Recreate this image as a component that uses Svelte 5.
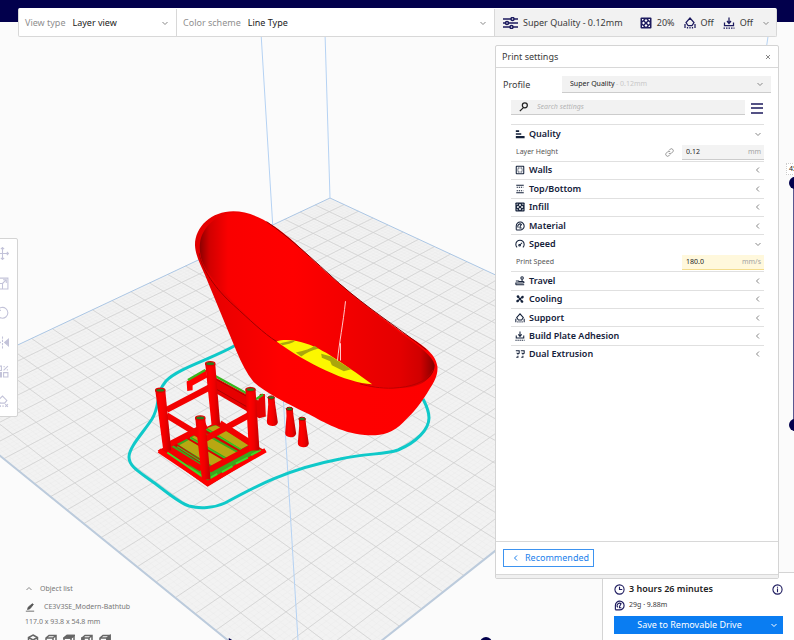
<script>
  let viewType = 'layer';
  let colorScheme = 'line';
  let profile = 'super';
  let search = '';
  let topLayer = 100;
  let bottomLayer = 0;
  let pathStep = 100;

  let rows = [
    { kind: 'category', name: 'Quality', icon: 'quality', open: true },
    { kind: 'setting', id: 'layer-height', name: 'Layer Height', value: '0.12', unit: 'mm', linked: true },
    { kind: 'category', name: 'Walls', icon: 'walls' },
    { kind: 'category', name: 'Top/Bottom', icon: 'topbottom' },
    { kind: 'category', name: 'Infill', icon: 'infill' },
    { kind: 'category', name: 'Material', icon: 'material' },
    { kind: 'category', name: 'Speed', icon: 'speed', open: true },
    { kind: 'setting', id: 'print-speed', name: 'Print Speed', value: '180.0', unit: 'mm/s', changed: true },
    { kind: 'category', name: 'Travel', icon: 'travel' },
    { kind: 'category', name: 'Cooling', icon: 'cooling' },
    { kind: 'category', name: 'Support', icon: 'support' },
    { kind: 'category', name: 'Build Plate Adhesion', icon: 'adhesion' },
    { kind: 'category', name: 'Dual Extrusion', icon: 'dual' }
  ];

  const tools = ['Move', 'Scale', 'Rotate', 'Mirror', 'Per model settings', 'Support blocker'];
  const views = ['3D view', 'Front view', 'Top view', 'Left view', 'Right view'];

  // build plate corners on screen: back, right, front, left
  const plate = [[330, 198], [715, 377], [304, 702], [-80, 391]];
  const cells = 22;

  // square to quad projection
  const [p0, p1, p2, p3] = plate;
  const sx = p0[0] - p1[0] + p2[0] - p3[0];
  const sy = p0[1] - p1[1] + p2[1] - p3[1];
  const ax = p1[0] - p2[0];
  const ay = p1[1] - p2[1];
  const bx = p3[0] - p2[0];
  const by = p3[1] - p2[1];
  const det = ax * by - bx * ay;
  const g = (sx * by - bx * sy) / det;
  const h = (ax * sy - sx * ay) / det;

  function project(u, v) {
    const w = g * u + h * v + 1;
    const x = (p1[0] - p0[0] + g * p1[0]) * u + (p3[0] - p0[0] + h * p3[0]) * v + p0[0];
    const y = (p1[1] - p0[1] + g * p1[1]) * u + (p3[1] - p0[1] + h * p3[1]) * v + p0[1];
    return (x / w).toFixed(2) + ' ' + (y / w).toFixed(2);
  }

  function gridPath(count) {
    let d = '';
    for (let i = 1; i < count; i++) {
      const t = i / count;
      d += `M${project(t, 0)}L${project(t, 1)}M${project(0, t)}L${project(1, t)}`;
    }
    return d;
  }

  const majorGrid = gridPath(cells);
  const minorGrid = gridPath(cells * 5);

  function toggle(row) {
    row.open = !row.open;
    rows = rows;
  }
</script>

{#snippet icon(name)}
  <svg class="icon" viewBox="0 0 24 24" aria-hidden="true">
    {#if name === 'quality'}
      <path class="solid" d="M2 3h8v4H2zM2 10h13v4H2zM2 17h21v5H2z" />
    {:else if name === 'walls'}
      <rect x="3" y="3" width="18" height="18" rx="1" />
      <rect x="7" y="7" width="10" height="10" stroke-dasharray="2 2" />
    {:else if name === 'topbottom'}
      <path d="M3 3h18M3 21h18" />
      <path d="M4 8h16M4 16h16" stroke-dasharray="3 2" />
    {:else if name === 'infill'}
      <rect class="solid" x="1" y="1" width="22" height="22" rx="2" />
      <path class="hole" d="M12 4l3 3-3 3-3-3zM12 14l3 3-3 3-3-3zM4 12l3-3 3 3-3 3zM14 12l3-3 3 3-3 3zM4 4h4l-4 4zM20 4v4l-4-4zM4 20v-4l4 4zM20 20h-4l4-4z" />
    {:else if name === 'material'}
      <path d="M3 21V12a9.500 9.500 0 1 1 9 9.500H3" />
      <path d="M8 16a5 5 0 1 1 8-7M12 14l4-7M12 14v3h4" />
    {:else if name === 'speed'}
      <path d="M5 20a10 10 0 1 1 14 0M11 15l6-6" />
      <circle cx="11" cy="15" r="2" />
    {:else if name === 'travel'}
      <path d="M2 21h20M2 21v-4h16c5 0 5-4 0-4H8M2 12h8" />
      <circle cx="17" cy="5" r="3" />
      <path d="M17 8v4" />
    {:else if name === 'cooling'}
      <circle class="solid" cx="12" cy="12" r="3" />
      <path class="solid" d="M11 11C3 10 2 3 7 3c4 0 4 4 4 8zM13 11c1-8 8-9 8-4 0 4-4 4-8 4zM13 13c8 1 9 8 4 8-4 0-4-4-4-8zM11 13c-1 8-8 9-8 4 0-4 4-4 8-4z" />
    {:else if name === 'support'}
      <path d="M8 17l-4-6 8-9 8 9-4 6zM2 14v8M22 14v8M7 20v3M12 20v3M17 20v3" />
    {:else if name === 'adhesion'}
      <path d="M12 1v11M8 8l4 5 4-5M3 11v6h18v-6" />
      <path d="M1 22h22" stroke-dasharray="3 2" />
    {:else if name === 'dual'}
      <path d="M2 4h8v6l-3 2-3-3M14 4h8v6l-3 2-3-3M3 20h4v-4M15 20h4v-4" />
    {/if}
  </svg>
{/snippet}

{#snippet chevron(dir)}
  <svg class="chevron" viewBox="0 0 16 16" aria-hidden="true">
    {#if dir === 'left'}
      <path d="M10 3L5 8l5 5" />
    {:else if dir === 'up'}
      <path d="M3 10l5-5 5 5" />
    {:else}
      <path d="M3 6l5 5 5-5" />
    {/if}
  </svg>
{/snippet}

<div class="app">
  <svg class="scene" viewBox="0 0 794 640" preserveAspectRatio="xMidYMid slice" role="img" aria-label="Sliced model on the build plate">
    <defs>
      <linearGradient id="inner" x1="0" y1="0" x2="1" y2="0">
        <stop offset="0" stop-color="#8c0000" />
        <stop offset="0.040" stop-color="#d00000" />
        <stop offset="0.120" stop-color="#fa0000" />
        <stop offset="0.400" stop-color="#ff0000" />
        <stop offset="0.600" stop-color="#f40000" />
        <stop offset="0.850" stop-color="#e40000" />
        <stop offset="0.940" stop-color="#d00000" />
        <stop offset="1" stop-color="#850000" />
      </linearGradient>
      <linearGradient id="outer" x1="0" y1="0" x2="1" y2="0">
        <stop offset="0" stop-color="#e00000" />
        <stop offset="0.150" stop-color="#ee0000" />
        <stop offset="0.350" stop-color="#ff0000" />
        <stop offset="1" stop-color="#fd0000" />
      </linearGradient>
      <linearGradient id="leg" x1="0" y1="0" x2="1" y2="0">
        <stop offset="0" stop-color="#e80000" />
        <stop offset="0.300" stop-color="#ff0000" />
        <stop offset="0.600" stop-color="#f00000" />
        <stop offset="1" stop-color="#c00000" />
      </linearGradient>
    </defs>

    <polygon class="plate" points={plate.map((p) => p.join(',')).join(' ')} />
    <path class="minor" d={minorGrid} />
    <path class="major" d={majorGrid} />
    <polygon class="edge" points={plate.map((p) => p.join(',')).join(' ')} />
    <path class="frontedge" d="M-80 391L304 702 715 377" />
    <path class="frame" d="M324 0L330 198M259 0L298 640M769 30l-3 20" />

    <!-- skirt -->
    <path class="skirt" d="M236 345C212 359 178 368 166 381C155 394 161 404 152 419C143 433 129 447 129 457C129 466 138 471 153 482C167 492 179 503 189 506C200 509 214 508 225 503C256 486 288 469 340 459C365 453 384 455 398 450C417 442 429 429 429 418C429 410 426 405 423 399" />

    <!-- stool -->
    <g transform="translate(120 330) scale(0.333)">
      <path fill="#e60000" d="M113 362L288 278l150 85-175 108z" />
      <path fill="#3ba61c" d="M150 350L285 284l138 78-162 98z" />
      <path fill="#b9a712" d="M178 346l32-18 110 66-33 20zM216 322l26-14 112 62-28 17zM262 294l26-8 100 58-24 13z" />
      <path class="gap" d="M164 343l118 78M202 323l122 72M250 300l114 64" />
      <path stroke="#2fcf22" stroke-width="4" fill="none" d="M172 350l108 68M210 324l116 68M258 298l106 62" />
      <path stroke="#ff0000" stroke-width="14" fill="none" d="M117 362l146 98 174-99" />
      <path stroke="#42d927" stroke-width="6" fill="none" d="M142 368l112 76M270 445l22-13M306 427l32-18M348 401l36-18M394 376l28-16" />
      <path fill="#e60000" d="M285 142l130 70 5-20 15 0 3 68-20 5-130-75z" />
      <path fill="#ff0000" d="M200 155l58-36 4 24-44 24v14l-16 2z" />
      <path stroke="#39b51f" stroke-width="7" fill="none" d="M204 150l52-30M286 138l98 54M408 208l22-14" />
      <path stroke="#ad0000" stroke-width="3" fill="none" d="M288 148l94 52M290 178l90 52" />
      <path class="bar" d="M140 240l130-68M300 280l105 68M140 348l120-62" />
      <path fill="url(#leg)" d="M256 102h30l15 184h-26z" />
      <path class="bar" d="M140 256l102 62M258 326l140-76" />
      <path class="bar" d="M145 355l100 62M268 420l130-70" />
      <path fill="url(#leg)" d="M106 182h30l18 180h-24z" />
      <path fill="url(#leg)" d="M377 180h30l12 182h-32z" />
      <path fill="url(#leg)" d="M226 265h30l16 184h-26z" />
      <g fill="#287f1c" stroke="#e00000" stroke-width="4">
        <ellipse cx="271" cy="101" rx="14" ry="6" />
        <ellipse cx="121" cy="181" rx="14" ry="6" />
        <ellipse cx="392" cy="179" rx="14" ry="6" />
        <ellipse cx="241" cy="264" rx="14" ry="6" />
      </g>
      <!-- pegs -->
      {#each [[454, 203], [509, 237], [547, 267]] as [x, y]}
        <path fill="url(#leg)" d="M{x - 10} {y}h20l2 20 8 54q-2 12-17 11-16-1-16-12l4-52z" />
        <ellipse cx={x} cy={y} rx="10" ry="5" fill="#23801e" stroke="#b80000" stroke-width="3" />
      {/each}
    </g>

    <!-- bathtub -->
    <g transform="translate(180 200) scale(0.333)">
      <path fill="url(#outer)" d="M45 135C45 80 95 34 160 34C220 34 280 72 330 115C385 165 440 220 490 260C550 312 620 362 668 398C720 430 768 458 773 500C775 525 765 545 750 567C725 610 700 640 670 668C635 703 600 709 555 706C480 700 420 660 380 640C320 610 250 575 220 545C200 520 185 490 170 455L75 225C60 190 46 165 45 135z" />
      <path fill="url(#inner)" d="M60 130C65 85 105 42 165 38C220 38 280 80 330 123C380 167 430 218 485 263C550 316 620 366 665 402C720 440 758 468 765 496C763 535 720 564 665 564C590 570 480 540 400 495C350 460 315 438 290 425C220 370 160 310 120 260C80 220 55 180 60 130z" />
      <path stroke="#8a0000" stroke-width="3" fill="none" d="M260 65C330 112 400 180 480 252C560 322 650 380 740 450" />
      <path stroke="#a00000" stroke-width="3" fill="none" d="M58 160C65 210 110 270 160 315C210 360 250 400 290 425" />
      <path stroke="#b80000" stroke-width="3" fill="none" d="M760 510C740 550 690 562 640 565C600 566 570 560 540 552" />
      <path fill="#fcf700" d="M290 425C310 417 350 420 380 432C430 448 480 485 577 553C500 550 380 490 290 425z" />
      <path fill="#aaa60c" d="M300 430l42-9q10 2-14 11l-20 4zM348 458q40-8 56-20l12 8q-30 8-52 24zM424 462l30 8 60 38-22 6-36-18-5-12-25-10z" />
      <path stroke="#ffc8c8" stroke-width="3" fill="none" d="M497 304C490 370 478 430 473 482M482 430v52" />
    </g>
  </svg>

  <header class="topbar">
    <div class="stage">
      <div class="pick">
        <label for="view-type">View type</label>
        <select id="view-type" bind:value={viewType}>
          <option value="layer">Layer view</option>
        </select>
        {@render chevron('down')}
      </div>
      <div class="pick">
        <label for="color-scheme">Color scheme</label>
        <select id="color-scheme" bind:value={colorScheme}>
          <option value="line">Line Type</option>
        </select>
        {@render chevron('down')}
      </div>
      <button class="summary">
        <svg class="sliders" viewBox="0 0 30 24" aria-hidden="true">
          <path d="M0 4h16M22 4h8M0 12h5M11 12h19M0 20h14M20 20h10" />
          <circle cx="19" cy="4" r="3" />
          <circle cx="8" cy="12" r="3" />
          <circle cx="17" cy="20" r="3" />
        </svg>
        <span class="quality">Super Quality - 0.12mm</span>
        <span class="stat">{@render icon('infill')}20%</span>
        <span class="stat">{@render icon('support')}Off</span>
        <span class="stat">{@render icon('adhesion')}Off</span>
        {@render chevron('down')}
      </button>
    </div>
  </header>

  <main>
    <nav class="tools" aria-label="Tools">
      {#each tools as tool, i}
        <button aria-label={tool}>
          <svg viewBox="0 0 24 24" aria-hidden="true">
            {#if i === 0}
              <path d="M12 1v22M1 12h22M9 4l3-3 3 3M9 20l3 3 3-3M4 9l-3 3 3 3M20 9l3 3-3 3" />
            {:else if i === 1}
              <path d="M2 2h20v20H2zM2 12h10v10M12 12l7-7M13 5h6v6" />
            {:else if i === 2}
              <path d="M3 8a10 10 0 1 1 0 9" />
              <path d="M3 2v6h6" />
            {:else if i === 3}
              <path d="M12 1v22" stroke-dasharray="4 2" />
              <path fill="#c3c3d9" d="M16 12l7-6v12zM8 12L1 6v12z" />
            {:else if i === 4}
              <path d="M2 2h8v8H2zM14 14h8v8h-8zM14 10l8-8M14 3h2M20 9h2" />
              <path fill="#c3c3d9" d="M3 14h7v8H3z" />
            {:else}
              <path d="M8 15l-4-5 8-8 8 8-4 5zM3 17v5M8 19v3M13 19v3M17 17l5 5M22 17l-5 5" />
            {/if}
          </svg>
        </button>
      {/each}
    </nav>

    <section class="panel" aria-labelledby="panel-title">
      <div class="panelhead">
        <h2 id="panel-title">Print settings</h2>
        <button class="close" aria-label="Close">
          <svg viewBox="0 0 8 8" aria-hidden="true"><path d="M2 2l4 4M6 2L2 6" /></svg>
        </button>
      </div>

      <div class="profile">
        <label for="profile">Profile</label>
        <div class="profilebox">
          <select id="profile" bind:value={profile}>
            <option value="super">Super Quality</option>
          </select>
          <span class="detail">- 0.12mm</span>
          {@render chevron('down')}
        </div>
      </div>

      <div class="searchrow">
        <div class="search">
          <svg viewBox="0 0 12 12" aria-hidden="true"><circle cx="7" cy="4" r="3" /><path d="M5 7L1 11" /></svg>
          <input type="text" placeholder="Search settings" aria-label="Search settings" bind:value={search} />
        </div>
        <button class="menu" aria-label="Setting visibility">
          <svg viewBox="0 0 12 12" aria-hidden="true"><path d="M0 2h12M0 6h12M0 11h12" /></svg>
        </button>
      </div>

      <div class="settings">
        {#each rows as row}
          {#if row.kind === 'category'}
            <button class="category" aria-expanded={!!row.open} on:click={() => toggle(row)}>
              {@render icon(row.icon)}
              <span>{row.name}</span>
              {@render chevron(row.open ? 'down' : 'left')}
            </button>
          {:else}
            <div class="setting">
              <label for={row.id}>{row.name}</label>
              {#if row.linked}
                <svg class="link" viewBox="0 0 24 24" aria-hidden="true">
                  <path d="M10 14a5 5 0 0 0 7 0l4-4a5 5 0 0 0-7-7l-3 3M14 10a5 5 0 0 0-7 0l-4 4a5 5 0 0 0 7 7l3-3" />
                </svg>
              {/if}
              <div class="value" class:changed={row.changed}>
                <input id={row.id} type="text" bind:value={row.value} />
                <span>{row.unit}</span>
              </div>
            </div>
          {/if}
        {/each}
      </div>

      <div class="panelfoot">
        <button class="recommended">{@render chevron('left')}Recommended</button>
      </div>
      <div class="grip"></div>
    </section>

    <div class="layers">
      <span class="layerlabel">45</span>
      <div class="track">
        <input type="range" aria-label="Top layer" bind:value={topLayer} />
        <input type="range" aria-label="Bottom layer" bind:value={bottomLayer} />
      </div>
    </div>
  </main>

  <footer>
    <div class="objects">
      <button class="listhead">{@render chevron('up')}Object list</button>
      <div class="object">
        <svg viewBox="0 0 12 12" aria-hidden="true"><path d="M1 11h10" /><path fill="#555" d="M3 9l1-3 5-4 1 1-4 5z" /></svg>
        <span>CE3V3SE_Modern-Bathtub</span>
      </div>
      <p>117.0 x 93.8 x 54.8 mm</p>
      <div class="views">
        {#each views as view, i}
          <button aria-label={view}>
            <svg viewBox="0 0 24 24" aria-hidden="true">
              {#if i === 0}
                <path d="M12 2l9 5v10l-9 5-9-5V7zM3 7l9 5 9-5M12 12v10" />
              {:else}
                <path d="M2 8l6-5h14v12l-6 6H2zM2 8h14v13M16 8l6-5" />
                {#if i === 2}<path fill="#666" d="M2 8l6-5h14l-6 5z" />{/if}
                {#if i === 3}<path fill="#666" d="M2 8h4v13H2z" />{/if}
                {#if i === 4}<path fill="#666" d="M16 8l6-5v12l-6 6z" />{/if}
              {/if}
            </svg>
          </button>
        {/each}
      </div>
    </div>

    <div class="simulation">
      <button aria-label="Play"><svg viewBox="0 0 12 12" aria-hidden="true"><path d="M1 0l10 6-10 6z" /></svg></button>
      <input type="range" aria-label="Path position" bind:value={pathStep} />
    </div>

    <section class="job">
      <div class="time">
        <svg viewBox="0 0 12 12" aria-hidden="true"><circle cx="6" cy="6" r="5" /><path d="M6 3v3h3" /></svg>
        <strong>3 hours 26 minutes</strong>
        <button aria-label="Print time details">
          <svg viewBox="0 0 12 12" aria-hidden="true"><circle cx="6" cy="6" r="5" /><path d="M6 5v4M6 3v1" /></svg>
        </button>
      </div>
      <div class="usage">{@render icon('material')}29g · 9.88m</div>
      <div class="save">
        <button class="savemain">Save to Removable Drive</button>
        <button class="savemore" aria-label="Choose output">{@render chevron('down')}</button>
      </div>
    </section>
  </footer>
</div>

<style>
  :global(body) {
    margin: 0;
    background: #fbfbfb;
  }
  .app {
    position: relative;
    display: grid;
    grid-template-rows: auto minmax(0, 1fr) 68px;
    height: 100vh;
    overflow: hidden;
    background: #fbfbfb;
    color: #3a3a3a;
    font-family: "Noto Sans", sans-serif;
    font-size: 9px;
    line-height: 12px;
  }
  button, input, select {
    font: inherit;
    color: inherit;
    margin: 0;
    padding: 0;
    border: 0;
    border-radius: 0;
    background: none;
    min-width: 0;
  }
  button {
    cursor: pointer;
  }
  select {
    appearance: none;
  }
  svg {
    display: block;
    fill: none;
    flex: none;
  }

  /* 3D scene */
  .scene {
    position: absolute;
    top: 0;
    left: 0;
    width: 100%;
    height: 100%;
  }
  .plate { fill: #f2f2f2; }
  .minor { stroke: #e8e8e8; stroke-width: 0.3; }
  .major { stroke: #d0d0d0; stroke-width: 0.8; }
  .edge { stroke: #abc6e4; }
  .frontedge { stroke: #bccbdc; stroke-width: 2; }
  .frame { stroke: #b5d2f3; }
  .skirt { stroke: #0fc9c9; stroke-width: 3; }
  .gap { stroke: #d80000; stroke-width: 9; }
  .bar { stroke: #f20000; stroke-width: 18; }

  /* top bar */
  .topbar {
    position: relative;
    padding: 8px 17px 0 18px;
    background: linear-gradient(#02004c 22px, transparent 22px);
  }
  .stage {
    display: grid;
    grid-template-columns: 158fr 318fr 281fr;
    height: 29px;
    box-sizing: border-box;
    border: 1px solid #d8d8d8;
    border-top-color: #fff;
    border-radius: 2px;
    background: #fff;
  }
  .pick {
    display: flex;
    align-items: center;
    gap: 7px;
    padding: 0 7px 0 6px;
    border-right: 1px solid #d8d8d8;
  }
  .pick label { color: #8f8f8f; }
  .pick select { flex: 1; color: #222; }
  .summary {
    display: flex;
    align-items: center;
    background: #f2f2f2;
    padding: 0 6px 0 8px;
  }
  .sliders {
    width: 15px;
    height: 12px;
    stroke: #1c1a5e;
    stroke-width: 3;
  }
  .quality {
    flex: 1;
    text-align: left;
    padding-left: 5px;
    white-space: nowrap;
  }
  .stat {
    display: flex;
    align-items: center;
    gap: 5px;
    margin-right: 9px;
  }
  .stat .icon, .stat :global(.icon) { width: 12px; height: 12px; color: #1c1a5e; }
  .icon {
    width: 10px;
    height: 10px;
    stroke: currentColor;
    stroke-width: 2.5;
  }
  .icon .solid { fill: currentColor; stroke: none; }
  .icon .hole { fill: #fff; stroke: none; }
  .chevron {
    width: 8px;
    height: 8px;
    stroke: #888;
    stroke-width: 2;
  }

  /* workspace */
  main {
    position: relative;
    z-index: 1;
    display: flex;
    justify-content: space-between;
    padding-right: 15px;
  }
  .tools {
    display: flex;
    flex-direction: column;
    width: 32px;
    height: 179px;
    box-sizing: border-box;
    margin: 201px 0 0 -14px;
    border: 1px solid #d4d4d4;
    border-radius: 2px;
    background: #fff;
  }
  .tools button {
    flex: 1;
    display: flex;
    align-items: center;
    justify-content: center;
  }
  .tools svg {
    width: 13px;
    height: 13px;
    stroke: #c3c3d9;
    stroke-width: 2;
  }

  .panel {
    display: flex;
    flex-direction: column;
    width: 284px;
    box-sizing: border-box;
    margin: 8px 0 -7px;
    border: 1px solid #d4d4d4;
    border-radius: 2px;
    background: #fff;
  }
  .panelhead {
    display: flex;
    align-items: center;
    justify-content: space-between;
    height: 21px;
    padding: 0 6px;
    border-bottom: 1px solid #d8d8d8;
  }
  h2 {
    margin: 0;
    font-size: 9px;
    font-weight: 400;
  }
  .close svg { width: 8px; height: 8px; stroke: #888; }
  .profile {
    display: flex;
    align-items: center;
    justify-content: space-between;
    margin: 8px 7px 0;
  }
  .profilebox {
    position: relative;
    display: flex;
    align-items: center;
    width: 209px;
    height: 17px;
    box-sizing: border-box;
    padding: 0 7px 0 8px;
    border-bottom: 1px solid #ccc;
    background: #f2f2f2;
    font-size: 7px;
  }
  .profilebox select { flex: 1; height: 16px; color: #222; }
  .detail {
    position: absolute;
    left: 54px;
    color: #c8c8c8;
    pointer-events: none;
  }
  .searchrow {
    display: flex;
    align-items: center;
    gap: 6px;
    margin: 7px 15px 0;
  }
  .search {
    flex: 1;
    display: flex;
    align-items: center;
    gap: 8px;
    height: 15px;
    box-sizing: border-box;
    padding-left: 8px;
    border-bottom: 1px solid #ccc;
    background: #f2f2f2;
  }
  .search svg { width: 10px; height: 10px; stroke: #222; stroke-width: 1.5; }
  .search input { flex: 1; font-size: 7px; font-style: italic; }
  .search input::placeholder { color: #b4b4b4; }
  .menu svg { width: 12px; height: 12px; stroke: #1c1a5e; stroke-width: 1.5; }

  .settings {
    display: flex;
    flex-direction: column;
    height: 239px;
    margin: 9px 14px 0 15px;
  }
  .category, .setting {
    flex: 1;
    display: flex;
    align-items: center;
    min-height: 0;
    border-top: 1px solid #e0e0e0;
  }
  .category {
    gap: 4px;
    padding: 0 2px 0 4px;
    color: #14213a;
    font-weight: 600;
    text-align: left;
  }
  .category span { flex: 1; }
  .setting {
    gap: 8px;
    padding-left: 5px;
    border-top-color: transparent;
    font-size: 7px;
  }
  .setting label { flex: 1; color: #555; }
  .link { width: 9px; height: 9px; stroke: #777; stroke-width: 2; }
  .value {
    display: flex;
    align-items: center;
    width: 82px;
    height: 15px;
    box-sizing: border-box;
    padding: 0 3px 0 4px;
    border-bottom: 1px solid #ccc;
    background: #f3f3f3;
  }
  .value input { flex: 1; color: #222; }
  .value span { color: #a3a3a3; }
  .changed { background: #fff8dc; border-bottom-color: #f3dc8c; }

  .panelfoot {
    margin-top: auto;
    padding: 7px;
    border-top: 1px solid #d8d8d8;
  }
  .recommended {
    display: flex;
    align-items: center;
    gap: 5px;
    height: 18px;
    box-sizing: border-box;
    padding: 0 4px 0 8px;
    border: 1px solid #3d93f0;
    color: #1a7fec;
  }
  .recommended .chevron { stroke: #1a7fec; }
  .grip {
    height: 3px;
    border-top: 1px solid #d8d8d8;
    background: #f0f0f0;
  }

  /* layer slider hugs the window edge */
  .layers {
    position: absolute;
    top: 126px;
    right: -7px;
    width: 15px;
  }
  .layerlabel {
    display: block;
    box-sizing: border-box;
    height: 12px;
    padding-left: 2px;
    border: 1px dotted #ccc;
    background: #fff;
    color: #222;
    font-size: 7px;
    line-height: 10px;
  }
  .track {
    display: grid;
    justify-items: center;
    width: 12px;
    height: 254px;
    margin: 2px 0 0 3px;
    background: linear-gradient(#5a5890, #5a5890) 4px 0 / 1px 100% no-repeat;
  }
  input[type="range"] {
    appearance: none;
    pointer-events: none;
  }
  input[type="range"]::-webkit-slider-thumb {
    appearance: none;
    width: 12px;
    height: 12px;
    border-radius: 50%;
    background: #02004c;
    pointer-events: auto;
  }
  .track input {
    grid-area: 1 / 1;
    width: 12px;
    height: 254px;
    writing-mode: vertical-lr;
    direction: rtl;
  }

  /* bottom */
  footer {
    position: relative;
    display: flex;
    justify-content: space-between;
    font-size: 7px;
  }
  .objects {
    display: flex;
    flex-direction: column;
    align-items: flex-start;
    padding: 11px 0 0 25px;
    color: #777;
  }
  .listhead {
    display: flex;
    align-items: center;
    gap: 7px;
  }
  .object {
    display: flex;
    align-items: center;
    gap: 9px;
    margin-top: 6px;
  }
  .object svg { width: 10px; height: 10px; stroke: #555; }
  .objects p { margin: 3px 0 0; }
  .views {
    display: flex;
    gap: 6px;
    padding: 6px 0 0 2px;
  }
  .views svg { width: 12px; height: 12px; stroke: #666; stroke-width: 3; }
  .simulation {
    position: absolute;
    left: 228px;
    top: 65px;
    display: flex;
    align-items: center;
    gap: 6px;
  }
  .simulation svg { width: 10px; height: 10px; fill: #02004c; }
  .simulation input { width: 248px; height: 12px; }
  .job {
    width: 192px;
    box-sizing: border-box;
    padding: 10px 11px 0;
    border: 1px solid #d4d4d4;
    border-width: 1px 0 0 1px;
    background: #fff;
  }
  .time, .usage {
    display: flex;
    align-items: center;
    gap: 4px;
    height: 12px;
  }
  .time svg { width: 11px; height: 11px; stroke: #1c1a5e; stroke-width: 1.2; }
  .time strong { flex: 1; color: #222; font-size: 9px; font-weight: 600; }
  .usage { margin-top: 4px; }
  .usage .icon, .usage :global(.icon) { width: 11px; height: 11px; color: #1c1a5e; }
  .save {
    display: flex;
    height: 18px;
    margin-top: 5px;
    background: #0a7df2;
    color: #fff;
    font-size: 9px;
  }
  .savemain { flex: 1; }
  .savemore { width: 18px; }
  .save .chevron { stroke: #fff; margin: 0 auto; }
</style>
